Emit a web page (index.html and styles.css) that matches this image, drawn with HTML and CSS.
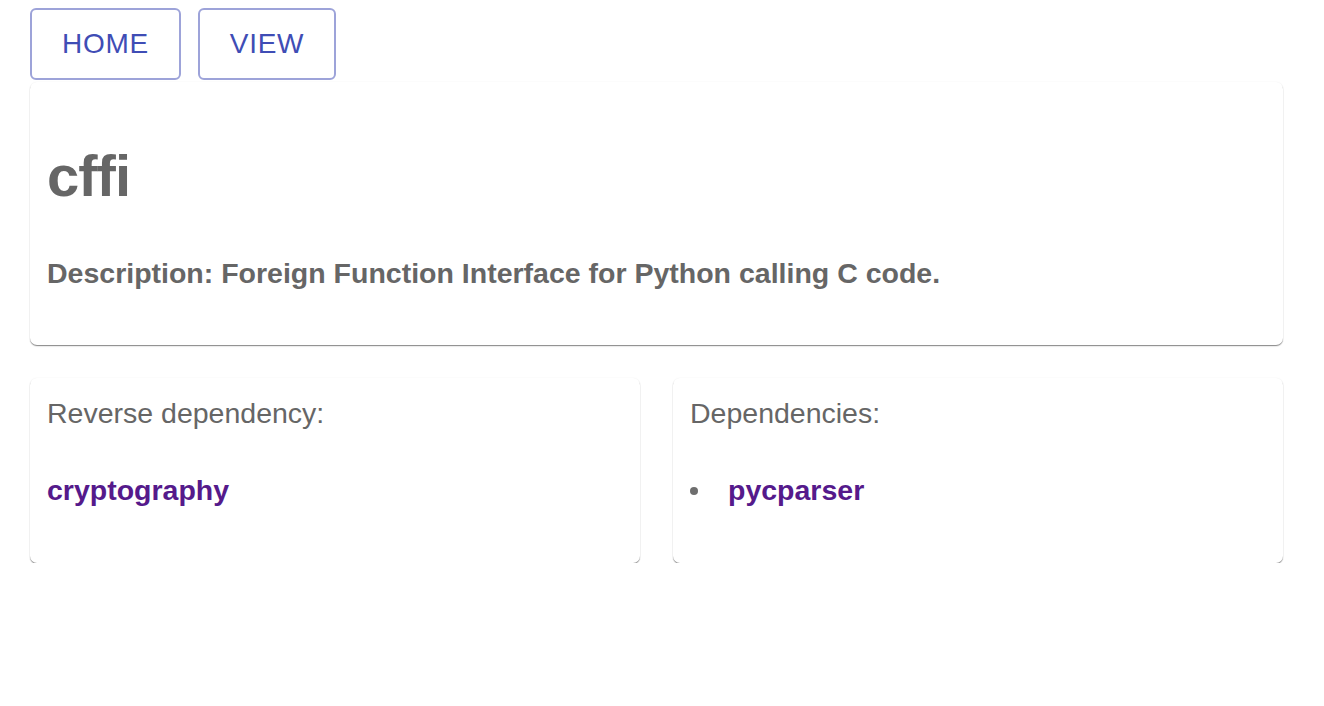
FILE: index.html
```html
<!DOCTYPE html>
<html>
<head>
<meta charset="utf-8">
<link rel="stylesheet" href="styles.css">
</head>
<body>
<div class="page">
  <nav class="nav">
    <a class="btn" href="#">HOME</a>
    <a class="btn" href="#">VIEW</a>
  </nav>
  <section class="card main">
    <h1 class="title">cffi</h1>
    <p class="desc">Description: Foreign Function Interface for Python calling C code.</p>
  </section>
  <div class="row">
    <section class="card sub">
      <p class="label">Reverse dependency:</p>
      <a class="dep" href="#">cryptography</a>
    </section>
    <section class="card sub">
      <p class="label">Dependencies:</p>
      <ul class="deps">
        <li><a class="dep" href="#">pycparser</a></li>
      </ul>
    </section>
  </div>
</div>
</body>
</html>
```

FILE: styles.css
```css
html, body {
  margin: 0;
  padding: 0;
  background: #fff;
}
body {
  padding-top: 8px;
  font-family: "Liberation Sans", Arial, Helvetica, sans-serif;
  color: #666;
}
.page {
  margin-left: 30px;
  width: 1253px;
}
.nav {
  display: flex;
  gap: 17px;
  height: 72px;
  margin-bottom: 2px;
}
.btn {
  display: flex;
  align-items: center;
  justify-content: center;
  box-sizing: border-box;
  height: 72px;
  padding: 0 30px;
  border: 2px solid #9da3d9;
  border-radius: 6px;
  color: #3f4db5;
  font-size: 28px;
  letter-spacing: 0.7px;
  text-decoration: none;
}
.card {
  background: #fff;
  border-radius: 7px;
  box-shadow: 0 1px 1px rgba(0,0,0,0.38), 0 2px 2px -1px rgba(0,0,0,0.15), 0 0 2px rgba(0,0,0,0.05);
  padding: 16px 17px;
  box-sizing: border-box;
}
.main {
  height: 263px;
}
.title {
  margin: 44px 0 0;
  font-size: 58px;
  line-height: 68px;
  font-weight: bold;
  letter-spacing: -1px;
}
.desc {
  margin: 48px 0 0;
  font-size: 28.5px;
  line-height: 30px;
  font-weight: bold;
}
.row {
  display: flex;
  gap: 33px;
  margin-top: 33px;
}
.sub {
  flex: 1;
  height: 185px;
}
.label {
  margin: 4px 0 0;
  font-size: 28.5px;
  line-height: 30px;
}
.dep {
  display: inline-block;
  margin-top: 47px;
  font-size: 28.5px;
  line-height: 30px;
  font-weight: bold;
  color: #551a8b;
  text-decoration: none;
}
.deps {
  margin: 0;
  padding: 0;
  list-style: none;
}
.deps .dep {
  margin-top: 0;
}
.deps li {
  display: flex;
  align-items: center;
  margin-top: 47px;
  line-height: 30px;
}
.deps li::before {
  content: "";
  width: 8px;
  height: 8px;
  border-radius: 50%;
  background: #6e6e6e;
  margin: 2px 30px 0 0;
}
```
